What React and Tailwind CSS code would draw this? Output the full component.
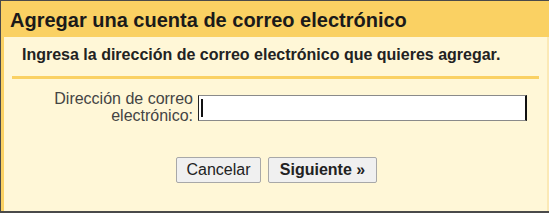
export default function App() {
  return (
    <div
      className="w-[549px] h-[213px] flex flex-col border-t border-l border-b-2 border-[#4a4a4a] bg-[#fff7d7] overflow-hidden"
      style={{ fontFamily: '"Liberation Sans", Arial, sans-serif' }}
    >
      {/* Header */}
      <div className="h-[36px] shrink-0 bg-[#fad163] flex items-center pl-[9px] pt-[1px]">
        <h1 className="text-[20px] font-bold text-[#1a1a1a] leading-[24px]">
          Agregar una cuenta de correo electrónico
        </h1>
      </div>

      {/* Body */}
      <div className="flex-1 flex flex-col border-l-[3px] border-[#fad163] border-r-2 border-r-[#fbe9b6]">
        <div className="mx-[8px] mt-[9px] border-b-[3px] border-[#fad163] pl-[10px] pb-[12px]">
          <p className="text-[16px] font-bold text-[#222] leading-[18px]">
            Ingresa la dirección de correo electrónico que quieres agregar.
          </p>
        </div>

        <div className="flex items-start mt-[11px]">
          <label className="w-[189px] text-right text-[16px] leading-[17px] text-[#444]">
            Dirección de correo
            <br />
            electrónico:
          </label>
          <div className="ml-[5px] mt-[5px] relative w-[329px] h-[26px] bg-white border border-[#8a8a8a] border-l-[#222] border-r-2 border-r-[#111]">
            <span className="absolute left-[2px] top-[3px] w-[2px] h-[18px] bg-[#111]" />
          </div>
        </div>

        <div className="flex justify-center gap-[7px] mt-[33px] pl-[2px]">
          <button className="w-[85px] h-[26px] bg-[#f0f0f0] border border-[#a8a8a8] rounded-[2px] text-[16px] text-[#222]">
            Cancelar
          </button>
          <button className="w-[109px] h-[26px] bg-[#f0f0f0] border border-[#a8a8a8] rounded-[2px] text-[16px] font-bold text-[#222]">
            Siguiente »
          </button>
        </div>
      </div>
    </div>
  );
}
